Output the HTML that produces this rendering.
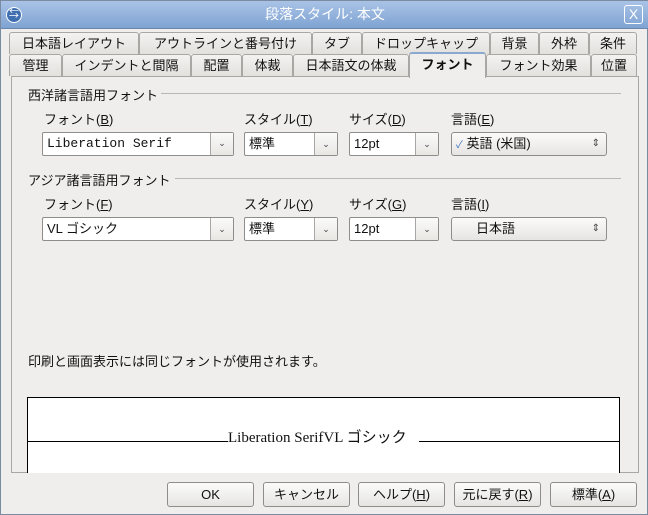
<!DOCTYPE html><html><head><meta charset="utf-8"><style>
*{box-sizing:border-box;margin:0;padding:0}
body{width:648px;height:515px;background:#efeeec;font-family:"Liberation Sans","Noto Sans CJK JP",sans-serif;font-size:13px;color:#111;position:relative;overflow:hidden;border:1px solid #7a8aa0}
.a{position:absolute;white-space:nowrap}
.title{left:0;top:0;width:648px;height:28px;background:linear-gradient(#a9c3e6,#7fa3d2);color:#fff;text-align:center;line-height:27px;font-size:14px;border-bottom:1px solid #6a87b0}
.tab{position:absolute;height:22px;border:1px solid #a8a7a4;border-bottom:none;background:linear-gradient(#f3f2f0,#e2e1de);text-align:center;line-height:21px;font-size:13px;border-radius:3px 3px 0 0}
.panel{left:10px;top:75px;width:628px;height:397px;border:1px solid #a8a7a4;background:#efeeec}
.sec{font-size:13px}
.hl{height:1px;background:#b8b7b4}
.box{position:absolute;height:24px;border:1px solid #8e8d8a;background:#fff;border-radius:2px;line-height:22px;padding-left:4px;font-size:13px}
.dd{position:absolute;top:0;right:0;width:23px;height:22px;border-left:1px solid #a8a7a4;background:linear-gradient(#fafafa,#e8e7e4);text-align:center;font-size:9px;line-height:22px;color:#444}
.btn{position:absolute;top:481px;width:87px;height:25px;border:1px solid #8e8d8a;border-radius:3px;background:linear-gradient(#fbfbfa,#e6e5e2);text-align:center;line-height:23px;font-size:13px}
.spin{position:absolute;height:24px;border:1px solid #8e8d8a;border-radius:3px;background:linear-gradient(#fbfbfa,#e6e5e2);line-height:22px;font-size:13px}
u{text-decoration:underline}
</style></head><body>
<div class="a title">段落スタイル: 本文</div>
<div class="a" style="left:5px;top:6px;width:16px;height:16px;border-radius:50%;background:#3f6fb0;border:1px solid #fff;color:#fff;font-size:10px;line-height:14px;text-align:center">⇆</div>
<div class="a" style="left:623px;top:4px;width:19px;height:19px;border:1px solid #fff;border-radius:3px;color:#fff;text-align:center;line-height:17px;font-size:14px">X</div>

<div class="tab" style="left:8px;top:31px;width:130px">日本語レイアウト</div>
<div class="tab" style="left:138px;top:31px;width:173px">アウトラインと番号付け</div>
<div class="tab" style="left:311px;top:31px;width:50px">タブ</div>
<div class="tab" style="left:361px;top:31px;width:128px">ドロップキャップ</div>
<div class="tab" style="left:489px;top:31px;width:49px">背景</div>
<div class="tab" style="left:538px;top:31px;width:50px">外枠</div>
<div class="tab" style="left:588px;top:31px;width:48px">条件</div>

<div class="tab" style="left:8px;top:53px;width:53px">管理</div>
<div class="tab" style="left:61px;top:53px;width:129px">インデントと間隔</div>
<div class="tab" style="left:190px;top:53px;width:51px">配置</div>
<div class="tab" style="left:241px;top:53px;width:51px">体裁</div>
<div class="tab" style="left:292px;top:53px;width:116px">日本語文の体裁</div>
<div class="tab" style="left:485px;top:53px;width:105px">フォント効果</div>
<div class="tab" style="left:590px;top:53px;width:46px">位置</div>

<div class="a panel"></div>
<div class="tab" style="left:408px;top:51px;width:77px;height:26px;background:#efeeec;font-weight:bold;border-top:2px solid #8aa8d0;z-index:2">フォント</div>

<div class="a sec" style="left:27px;top:84px">西洋諸言語用フォント</div>
<div class="a hl" style="left:160px;top:92px;width:460px"></div>
<div class="a" style="left:43px;top:108px">フォント(<u>B</u>)</div>
<div class="a" style="left:243px;top:108px">スタイル(<u>T</u>)</div>
<div class="a" style="left:348px;top:108px">サイズ(<u>D</u>)</div>
<div class="a" style="left:450px;top:108px">言語(<u>E</u>)</div>
<div class="box" style="left:41px;top:131px;width:192px;font-family:'Liberation Mono',monospace">Liberation Serif<div class="dd">⌄</div></div>
<div class="box" style="left:243px;top:131px;width:94px">標準<div class="dd">⌄</div></div>
<div class="box" style="left:348px;top:131px;width:90px">12pt<div class="dd">⌄</div></div>
<div class="spin" style="left:450px;top:131px;width:156px;padding-left:4px"><span style="color:#3a6fc0;font-size:10px">✓</span> 英語 (米国)<span style="position:absolute;right:6px;top:0;font-size:10px;color:#444">⇕</span></div>

<div class="a sec" style="left:27px;top:169px">アジア諸言語用フォント</div>
<div class="a hl" style="left:174px;top:177px;width:446px"></div>
<div class="a" style="left:43px;top:193px">フォント(<u>F</u>)</div>
<div class="a" style="left:243px;top:193px">スタイル(<u>Y</u>)</div>
<div class="a" style="left:348px;top:193px">サイズ(<u>G</u>)</div>
<div class="a" style="left:450px;top:193px">言語(<u>I</u>)</div>
<div class="box" style="left:41px;top:216px;width:192px">VL ゴシック<div class="dd">⌄</div></div>
<div class="box" style="left:243px;top:216px;width:94px">標準<div class="dd">⌄</div></div>
<div class="box" style="left:348px;top:216px;width:90px">12pt<div class="dd">⌄</div></div>
<div class="spin" style="left:450px;top:216px;width:156px;padding-left:24px">日本語<span style="position:absolute;right:6px;top:0;font-size:10px;color:#444">⇕</span></div>

<div class="a" style="left:27px;top:350px">印刷と画面表示には同じフォントが使用されます。</div>

<div class="a" style="left:26px;top:396px;width:593px;height:76px;background:#fff;border:1px solid #000;border-bottom:none"></div>
<div class="a" style="left:27px;top:440px;width:200px;height:1px;background:#000"></div>
<div class="a" style="left:418px;top:440px;width:200px;height:1px;background:#000"></div>
<div class="a" style="left:227px;top:425px;font-family:'Liberation Serif','Noto Sans CJK JP',serif;font-size:15px">Liberation SerifVL ゴシック</div>

<div class="btn" style="left:166px">OK</div>
<div class="btn" style="left:262px">キャンセル</div>
<div class="btn" style="left:357px">ヘルプ(<u>H</u>)</div>
<div class="btn" style="left:453px">元に戻す(<u>R</u>)</div>
<div class="btn" style="left:549px">標準(<u>A</u>)</div>
</body></html>
